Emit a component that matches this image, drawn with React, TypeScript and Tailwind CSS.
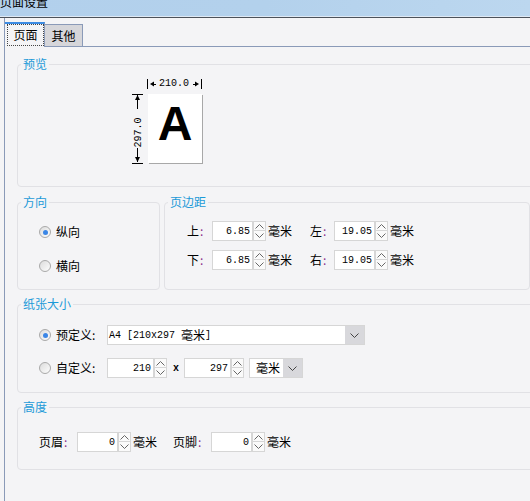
import React from "react";

const CJK = "font-['Noto_Sans_CJK_SC','Noto_Sans',sans-serif]";
const MONO = "font-['Liberation_Mono',monospace]";

function Up() {
  return (
    <svg width="9" height="5" viewBox="0 0 9 5">
      <path d="M0.5 4.5 L4.5 0.5 L8.5 4.5" fill="none" stroke="#666" strokeWidth="1" />
    </svg>
  );
}
function Down({ color = "#666" }: { color?: string }) {
  return (
    <svg width="9" height="5" viewBox="0 0 9 5">
      <path d="M0.5 0.5 L4.5 4.5 L8.5 0.5" fill="none" stroke={color} strokeWidth="1" />
    </svg>
  );
}

function Spin() {
  return (
    <div className="flex h-[20px] w-[13px] flex-col">
      <div className="flex h-[10px] items-center justify-center border border-[#d6d6d6] bg-[#fafafa]">
        <Up />
      </div>
      <div className="flex h-[10px] items-center justify-center border border-t-0 border-[#d6d6d6] bg-[#fafafa]">
        <Down />
      </div>
    </div>
  );
}

function NumField({ value, wide }: { value: string; wide?: boolean }) {
  return (
    <div className="flex items-center">
      <div
        className={`flex h-[20px] items-center justify-end border border-[#d6d6d6] bg-white pr-[2px] text-[10px] text-black ${MONO} ${
          wide ? "w-[47px]" : "w-[41px]"
        }`}
      >
        {value}
      </div>
      <Spin />
    </div>
  );
}

function Label({ text, className }: { text: string; className: string }) {
  return (
    <div className={`flex items-center text-[12px] text-black ${className}`}>
      <span>{text}</span>
      <span className="ml-[1px] text-[#8a2d8a]">:</span>
    </div>
  );
}

function Unit({ className = "" }: { className?: string }) {
  return <span className={`text-[12px] text-black ${className}`}>毫米</span>;
}

function Radio({ checked, label }: { checked?: boolean; label: string }) {
  return (
    <div className="flex items-center">
      <span className="flex h-[12px] w-[12px] items-center justify-center rounded-full border border-[#a9a9a9] bg-gradient-to-br from-[#dcdcdc] to-[#fdfdfd]">
        {checked && <span className="h-[5px] w-[5px] rounded-full bg-[#3b86e6]" />}
      </span>
      <span className="ml-[5px] text-[12px] leading-[14px] text-black">{label}</span>
    </div>
  );
}

function Group({
  title,
  className,
  children,
}: {
  title: string;
  className: string;
  children?: React.ReactNode;
}) {
  return (
    <fieldset className={`rounded-[4px] border border-[#e1e1e5] ${className}`}>
      <legend className="ml-[3px] px-[2px] text-[12px] leading-[14px] text-[#1c9ad8]">{title}</legend>
      {children}
    </fieldset>
  );
}

function Preview() {
  return (
    <div className="relative ml-[112px] mt-[7px] h-[88px] w-[76px]">
      <svg className="absolute left-0 top-0" width="76" height="88" viewBox="0 0 76 88">
        {/* top dimension */}
        <line x1="17.5" y1="1" x2="17.5" y2="11" stroke="#000" />
        <line x1="71.5" y1="1" x2="71.5" y2="11" stroke="#000" />
        <polygon points="20,6 24,3.5 24,8.5" fill="#000" />
        <line x1="22" y1="6.5" x2="26" y2="6.5" stroke="#000" />
        <polygon points="69,6 65,3.5 65,8.5" fill="#000" />
        <line x1="63" y1="6.5" x2="67" y2="6.5" stroke="#000" />
        {/* left dimension */}
        <line x1="2" y1="16.5" x2="13" y2="16.5" stroke="#000" />
        <line x1="7.5" y1="17" x2="7.5" y2="31" stroke="#000" />
        <polygon points="7.5,17 5,22 10,22" fill="#000" />
        <line x1="7.5" y1="70" x2="7.5" y2="84" stroke="#000" />
        <polygon points="7.5,84 5,79 10,79" fill="#000" />
        <line x1="2" y1="85.5" x2="13" y2="85.5" stroke="#000" />
      </svg>
      <div className={`absolute left-[29px] top-[0px] text-[10px] leading-[12px] text-black ${MONO}`}>210.0</div>
      <div className="absolute left-[2px] top-[39px] flex h-[30px] w-[11px] items-center justify-center">
        <span className={`-rotate-90 whitespace-nowrap text-[10px] leading-[11px] text-black ${MONO}`}>297.0</span>
      </div>
      <div className="absolute left-[18px] top-[16px] flex h-[69px] w-[54px] items-start justify-center bg-white shadow-[1px_1px_0_#a8a8a8]">
        <span className="mt-[6px] font-['Liberation_Sans',sans-serif] text-[48px] font-bold leading-[48px] text-black">A</span>
      </div>
    </div>
  );
}

export default function App() {
  return (
    <div className={`flex h-[501px] w-[530px] flex-col overflow-hidden bg-[#f4f4f6] ${CJK}`}>
      {/* title bar */}
      <div className="h-[16px] overflow-hidden bg-gradient-to-r from-[#b2d0ec] via-[#b3d1ec] to-[#bcd7ef]">
        <div className="-mt-[5px] text-[12px] leading-[14px] text-black">页面设置</div>
      </div>
      <div className="h-px bg-[#dfe9f4]" />
      <div className="h-px bg-[#4c525a]" />

      {/* body */}
      <div className="ml-[4px] flex flex-1 flex-col border-l border-[#8a9ab8]">
        {/* tabs */}
        <div className="flex h-[29px] items-end">
          <div className="flex h-[25px] w-[40px] border-r border-t-2 border-[#8a9ab8] border-t-[#3c8ce4] pb-[1px] pl-[2px] pt-[0px]">
            <div className="flex flex-1 items-center justify-center border border-dotted border-[#444] text-[12px] text-black">
              页面
            </div>
          </div>
          <div className="flex h-[23px] w-[38px] items-center justify-center border-b border-r border-t border-[#8a9ab8] bg-[#d6d6da] text-[12px] text-black">
            其他
          </div>
          <div className="h-px flex-1 bg-[#8a9ab8]" />
        </div>

        {/* panel */}
        <div className="flex flex-col pl-[12px] pt-[10px]">
          <Group title="预览" className="h-[130px] w-[520px]">
            <Preview />
          </Group>

          <div className="mt-[8px] flex gap-[4px]">
            <Group title="方向" className="h-[95px] w-[145px]">
              <div className="flex flex-col gap-[20px] pl-[21px] pt-[16px]">
                <Radio checked label="纵向" />
                <Radio label="横向" />
              </div>
            </Group>
            <Group title="页边距" className="h-[95px] w-[371px]">
              <div className="flex flex-col gap-[9px] pl-[22px] pt-[12px]">
                <div className="flex items-center">
                  <Label text="上" className="w-[25px]" />
                  <NumField value="6.85" />
                  <Unit className="ml-[2px] w-[42px]" />
                  <Label text="左" className="w-[24px]" />
                  <NumField value="19.05" />
                  <Unit className="ml-[2px]" />
                </div>
                <div className="flex items-center">
                  <Label text="下" className="w-[25px]" />
                  <NumField value="6.85" />
                  <Unit className="ml-[2px] w-[42px]" />
                  <Label text="右" className="w-[24px]" />
                  <NumField value="19.05" />
                  <Unit className="ml-[2px]" />
                </div>
              </div>
            </Group>
          </div>

          <Group title="纸张大小" className="mt-[7px] h-[96px] w-[520px]">
            <div className="flex flex-col gap-[13px] pl-[21px] pt-[14px]">
              <div className="flex items-center">
                <div className="w-[68px]">
                  <Radio checked label="预定义:" />
                </div>
                <div className="flex h-[20px] w-[258px] items-stretch border border-[#d6d6d6] bg-white">
                  <div className="flex flex-1 items-center pl-[1px] text-[12px] text-black">
                    <span className={`text-[10px] ${MONO}`}>A4 [210x297</span>
                    <span className="ml-[6px]">毫米</span>
                    <span className={`text-[10px] ${MONO}`}>]</span>
                  </div>
                  <div className="flex w-[19px] items-center justify-center bg-[#d8d8dc]">
                    <Down color="#444" />
                  </div>
                </div>
              </div>
              <div className="flex items-center">
                <div className="w-[68px]">
                  <Radio label="自定义:" />
                </div>
                <NumField value="210" wide />
                <span className={`ml-[6px] w-[11px] text-[10px] font-bold text-black ${MONO}`}>x</span>
                <NumField value="297" wide />
                <div className="ml-[5px] flex h-[20px] w-[54px] items-stretch border border-[#d6d6d6] bg-white">
                  <div className="flex flex-1 items-center pl-[6px] text-[12px] text-black">毫米</div>
                  <div className="flex w-[19px] items-center justify-center bg-[#d8d8dc]">
                    <Down color="#444" />
                  </div>
                </div>
              </div>
            </div>
          </Group>

          <Group title="高度" className="mt-[7px] h-[70px] w-[520px]">
            <div className="flex items-center pl-[21px] pt-[18px]">
              <Label text="页眉" className="w-[38px]" />
              <NumField value="0" />
              <Unit className="ml-[2px] w-[40px]" />
              <Label text="页脚" className="w-[38px]" />
              <NumField value="0" />
              <Unit className="ml-[2px]" />
            </div>
          </Group>
        </div>
      </div>
    </div>
  );
}
